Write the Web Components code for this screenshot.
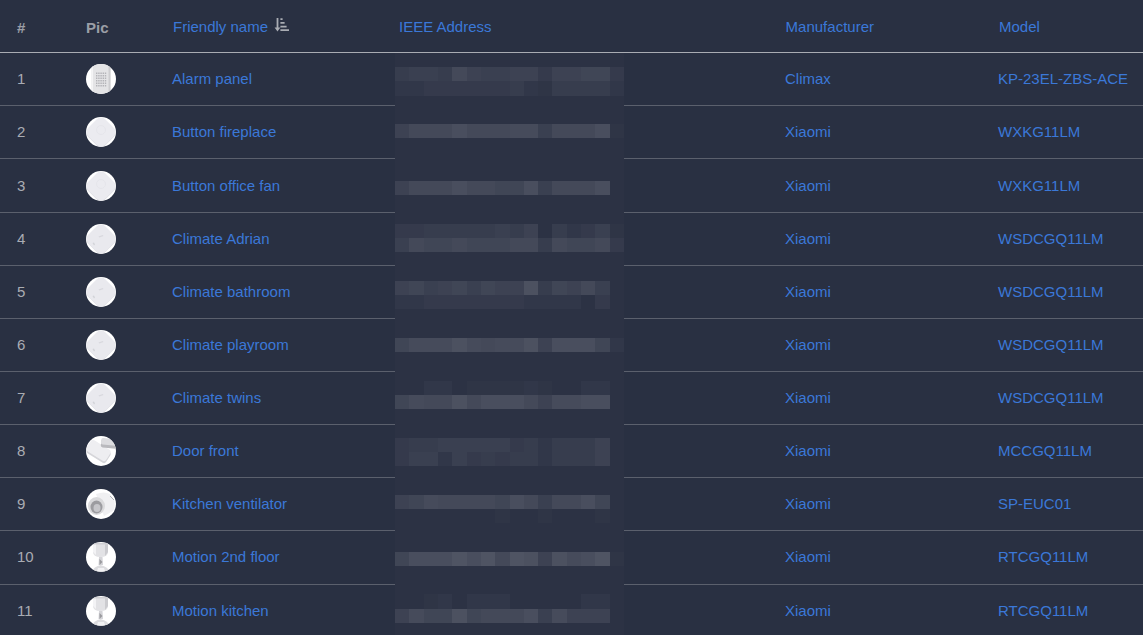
<!DOCTYPE html>
<html lang="en">
<head>
<meta charset="utf-8">
<title>Devices</title>
<style>
  html, body { margin: 0; height: 100%; overflow: hidden; background: #293042; }
  body { font: 15px "Liberation Sans", Arial, sans-serif; color: #a9acb3; }
</style>
</head>
<body>

<template id="device-table-template">
  <style>
    :host { display: block; position: relative; --cols: 69px 86px 227px 386px 213px 1fr; }
    .head {
      display: grid;
      grid-template-columns: var(--cols);
      height: 53.04px;
      box-sizing: border-box;
      border-bottom: 1px solid #a9acb3;
      align-items: center;
      color: #9b9ea6;
    }
    .head > * { padding: 0 0 0 17px; margin-top: 2px; }
    .head b { font-weight: 700; }
    .head a { color: #3b78d8; padding-left: 18px; margin-top: 1px; display: flex; align-items: center; gap: 6px; }
    .head a.ieee { padding-left: 17px; }
    .head a.maker { padding-left: 17.6px; }
    .head a svg { margin-top: -3px; }
    pixel-mosaic { position: absolute; left: 395px; top: 53px; }
  </style>
  <div class="head">
    <b>#</b>
    <b>Pic</b>
    <a>Friendly name
      <svg width="15" height="14" viewBox="0 0 15 14"><path fill="#a9acb3" d="M2.6 0h1.800v9.600h2L3.500 13.600.6 9.600h2zM6.400.3h2.200v1.800H6.400zM6.400 4h4.200v1.800H6.400zM6.400 7.700h6.200v1.800H6.400zM6.400 11.200h8.600V13H6.400z"/></svg>
    </a>
    <a class="ieee">IEEE Address</a>
    <a class="maker">Manufacturer</a>
    <a>Model</a>
  </div>
  <slot></slot>
  <pixel-mosaic></pixel-mosaic>
</template>

<template id="device-row-template">
  <style>
    :host {
      display: grid;
      grid-template-columns: var(--cols);
      height: 53.16px;
      box-sizing: border-box;
      border-bottom: 1px solid #5b606d;
      align-items: center;
    }
    span, a { padding-left: 17px; margin-top: calc(var(--text-y, 0px) - 1px); white-space: nowrap; }
    a { color: #3b78d8; }
    device-pic { margin-left: 17px; margin-top: calc(var(--pic-y, 0px) - 0.14px); }
  </style>
  <span id="idx"></span>
  <device-pic></device-pic>
  <a id="name"></a>
  <span></span>
  <a id="maker"></a>
  <a id="model"></a>
</template>

<script>
  let dots = "";
  for (let r = 0; r < 6; r++) {
    for (let c = 0; c < 5; c++) {
      dots += `<rect x="${10 + c * 2.2}" y="${8.500 + r * 2.500}" width="1.400" height="1.500"/>`;
    }
  }

  const PICS = {
    alarm: `<rect x="5.500" y="-1" width="19" height="32" fill="#e4e4e6"/><rect x="5.500" y="-1" width="1.500" height="32" fill="#f4f4f5"/>
      <rect x="22.500" y="-1" width="2" height="32" fill="#cdcdd0"/>
      <g fill="#b4b4b8">${dots}</g>`,
    button: `<rect x="3" y="3.800" width="24" height="24" rx="6" transform="rotate(45 15 15.800)" fill="#dcdce2"/>
      <rect x="3" y="3" width="24" height="24" rx="6" transform="rotate(45 15 15)" fill="#ebebf0"/>
      <circle cx="15" cy="13" r="4.500" fill="none" stroke="#e2e2e8" stroke-width=".7"/>`,
    climate: `<rect x="3" y="3.600" width="24" height="24" rx="6" transform="rotate(45 15 15.600)" fill="#dedee4"/>
      <rect x="3" y="3" width="24" height="24" rx="6" transform="rotate(45 15 15)" fill="#e9e9ee"/>
      <path d="M12.500 12.500l4-1.500 1 1-4 1.500z" fill="#d8d8de"/><path d="M6.500 19l1.500 2.500 1-1-1-2z" fill="#d2d3d8"/>`,
    door: `<rect x="1" y="10" width="23" height="13" rx="3" transform="rotate(32 12.500 16.500)" fill="#d6d6da"/>
      <rect x="1" y="8" width="23" height="13" rx="3" transform="rotate(32 12.500 14.500)" fill="#eeeef1"/>
      <rect x="15" y="4" width="17" height="8" rx="2" transform="rotate(6 22 8)" fill="#b9b9bd"/>
      <rect x="15" y="2.500" width="17" height="6.500" rx="2" transform="rotate(6 22 6)" fill="#dcdcdf"/>`,
    plug: `<path d="M10 5q8-3 14 0l4 6q2 6-1 11l-9 5z" fill="#f0f0f2"/>
      <ellipse cx="10.500" cy="17" rx="8.500" ry="9" fill="#dadadc"/><ellipse cx="10.500" cy="18" rx="6" ry="6.500" fill="#9c9ca0"/><ellipse cx="11" cy="19" rx="3.500" ry="4" fill="#c6c6ca"/>
      <path d="M24 7l4 4" stroke="#a0a0a4" stroke-width=".8"/>`,
    motion: `<path d="M7 1h15v9q0 5-7.500 5T7 10z" fill="#e2e2e5"/><path d="M7 1h3v12l-3-3z" fill="#f3f3f5"/><path d="M19 1h3v9l-3 4z" fill="#cbcbcf"/><path d="M7 1h15v1.500H7z" fill="#d0d0d4"/>
      <path d="M13 15h3.500l.5 8h-4.500z" fill="#d4d4d8"/><path d="M13.500 17l3 3-3 3z" fill="#9a9a9e"/><path d="M6 30q1-5 8.500-7 8 2 9 7z" fill="#dcdcdf"/><path d="M12 26h6l1 3h-8z" fill="#f2f2f4"/>`
  };

  customElements.define("device-pic", class extends HTMLElement {
    static get observedAttributes() { return ["kind"]; }
    connectedCallback() {
      if (!this.shadowRoot) this.attachShadow({ mode: "open" });
      this.render();
    }
    attributeChangedCallback() {
      if (this.shadowRoot) this.render();
    }
    render() {
      const id = "c" + Math.random().toString(36).slice(2);
      this.shadowRoot.innerHTML = `
        <style>
          :host { display: block; width: 30px; height: 30px; }
          svg { display: block; }
        </style>
        <svg width="30" height="30" viewBox="0 0 30 30">
          <defs>
            <clipPath id="${id}"><circle cx="15" cy="15" r="15"/></clipPath>
            <filter id="${id}b"><feGaussianBlur stdDeviation="0.45"/></filter>
          </defs>
          <g clip-path="url(#${id})">
            <rect width="30" height="30" fill="#fff"/>
            <g filter="url(#${id}b)">${PICS[this.getAttribute("kind")] || ""}</g>
          </g>
        </svg>`;
    }
  });

  // blurred addresses: strip index -> brightness of each of the 16 cells
  const STRIPS = {
    0: [4,5,5,4,8,6,5,5,6,6,3,6,6,7,7,3],
    1: [2,2,3,3,3,3,3,3,4,2,1,4,4,4,4,2],
    4: [6,8,8,8,10,8,8,8,9,9,5,8,8,8,10,1],
    8: [6,8,8,8,10,8,8,7,7,10,5,8,8,8,10,0],
    11: [3,3,4,4,4,4,4,5,4,6,0,4,2,3,5,1],
    12: [5,8,7,7,8,7,7,7,8,8,4,8,7,7,8,3],
    15: [6,7,5,6,7,5,7,6,6,11,4,7,6,8,5,0],
    16: [2,2,3,3,3,3,3,3,3,2,2,2,2,0,3,0],
    19: [7,9,9,9,11,9,8,9,9,11,6,10,10,10,7,2],
    22: [0,0,2,2,0,1,1,1,1,2,1,0,0,2,2,0],
    23: [7,9,8,8,11,8,10,10,10,8,6,9,9,10,10,0],
    26: [3,4,4,5,5,5,5,5,3,4,2,4,4,4,6,0],
    27: [3,5,5,2,5,3,4,3,4,4,2,4,4,4,6,0],
    30: [6,7,9,8,8,8,8,7,10,8,5,8,8,10,7,0],
    31: [0,0,0,0,0,0,0,1,0,0,1,0,0,0,1,0],
    34: [7,10,10,10,12,10,12,8,12,11,6,11,9,10,12,1],
    37: [0,0,1,2,0,2,2,2,0,0,0,0,0,2,2,0],
    38: [6,9,7,7,11,7,8,8,8,10,5,9,6,6,6,0]
  };

  customElements.define("pixel-mosaic", class extends HTMLElement {
    connectedCallback() {
      const w = 229, h = 582, cw = w / 16, ch = 14.25;
      let rects = "";
      for (const k in STRIPS) {
        STRIPS[k].forEach((v, i) => {
          if (!v) return;
          const x = Math.round(i * cw), x2 = Math.round((i + 1) * cw);
          const y = Math.round(14 + k * ch), y2 = Math.round(14 + (+k + 1) * ch);
          rects += `<rect x="${x}" y="${y}" width="${x2 - x}" height="${y2 - y}" fill="#fff" fill-opacity="${(v * 0.014).toFixed(3)}"/>`;
        });
      }
      this.attachShadow({ mode: "open" }).innerHTML = `
        <style>
          :host { display: block; width: ${w}px; height: ${h}px; background: #2c3244; }
          svg { display: block; }
        </style>
        <svg width="${w}" height="${h}" shape-rendering="crispEdges">${rects}</svg>`;
    }
  });

  customElements.define("device-table", class extends HTMLElement {
    connectedCallback() {
      this.attachShadow({ mode: "open" });
      this.shadowRoot.appendChild(document.querySelector("#device-table-template").content.cloneNode(true));
    }
  });

  customElements.define("device-row", class extends HTMLElement {
    connectedCallback() {
      const root = this.attachShadow({ mode: "open" });
      root.appendChild(document.querySelector("#device-row-template").content.cloneNode(true));
      root.querySelector("#idx").textContent = this.getAttribute("idx");
      root.querySelector("#name").textContent = this.getAttribute("name");
      root.querySelector("#maker").textContent = this.getAttribute("maker");
      root.querySelector("#model").textContent = this.getAttribute("model");
      root.querySelector("device-pic").setAttribute("kind", this.getAttribute("pic"));
    }
  });
</script>

<device-table>
  <device-row idx="1" pic="alarm" name="Alarm panel" maker="Climax" model="KP-23EL-ZBS-ACE"></device-row>
  <device-row idx="2" pic="button" name="Button fireplace" maker="Xiaomi" model="WXKG11LM"></device-row>
  <device-row idx="3" pic="button" name="Button office fan" maker="Xiaomi" model="WXKG11LM" style="--pic-y: 1px; --text-y: 2px"></device-row>
  <device-row idx="4" pic="climate" name="Climate Adrian" maker="Xiaomi" model="WSDCGQ11LM"></device-row>
  <device-row idx="5" pic="climate" name="Climate bathroom" maker="Xiaomi" model="WSDCGQ11LM"></device-row>
  <device-row idx="6" pic="climate" name="Climate playroom" maker="Xiaomi" model="WSDCGQ11LM"></device-row>
  <device-row idx="7" pic="climate" name="Climate twins" maker="Xiaomi" model="WSDCGQ11LM"></device-row>
  <device-row idx="8" pic="door" name="Door front" maker="Xiaomi" model="MCCGQ11LM"></device-row>
  <device-row idx="9" pic="plug" name="Kitchen ventilator" maker="Xiaomi" model="SP-EUC01"></device-row>
  <device-row idx="10" pic="motion" name="Motion 2nd floor" maker="Xiaomi" model="RTCGQ11LM" style="--text-y: -2px"></device-row>
  <device-row idx="11" pic="motion" name="Motion kitchen" maker="Xiaomi" model="RTCGQ11LM"></device-row>
</device-table>

</body>
</html>
